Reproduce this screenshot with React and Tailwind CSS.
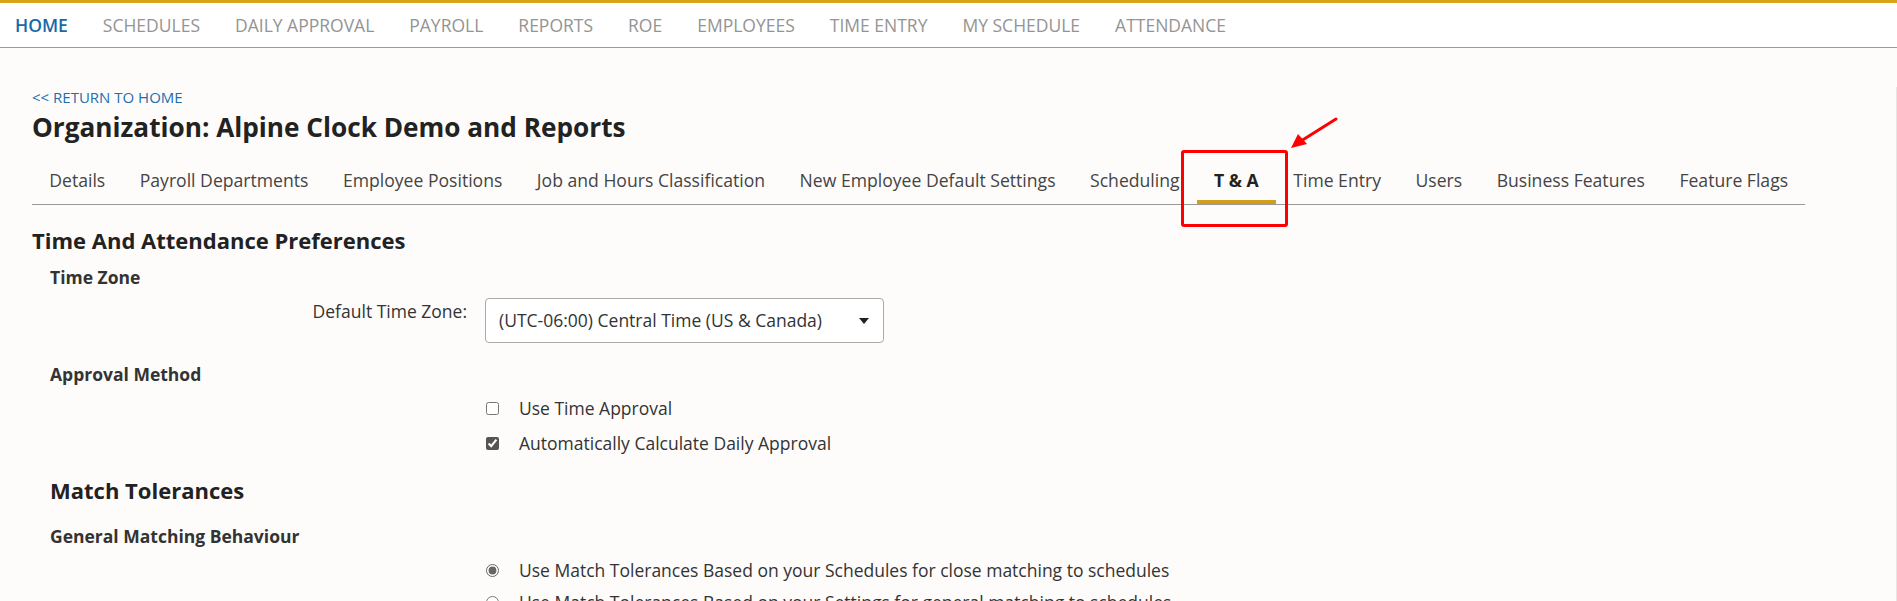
import React, { useState } from 'react';

const NAV = ['HOME', 'SCHEDULES', 'DAILY APPROVAL', 'PAYROLL', 'REPORTS', 'ROE', 'EMPLOYEES', 'TIME ENTRY', 'MY SCHEDULE', 'ATTENDANCE'];

const TABS = [
  'Details',
  'Payroll Departments',
  'Employee Positions',
  'Job and Hours Classification',
  'New Employee Default Settings',
  'Scheduling',
  'T & A',
  'Time Entry',
  'Users',
  'Business Features',
  'Feature Flags',
];

const FieldRow = ({ label, children, className = '' }) => (
  <div className={`flex items-start ${className}`}>
    <div className="w-[435px] shrink-0 pr-[18px] text-right text-[17.5px] leading-6 text-[#333]">{label}</div>
    <div className="flex-1">{children}</div>
  </div>
);

const Check = ({ label, checked }) => (
  <label className="flex items-center h-6 text-[17.5px] text-[#333]">
    <input type="checkbox" defaultChecked={checked} className="ml-[1px] w-[13px] h-[13px] accent-[#555]" />
    <span className="ml-[20px]">{label}</span>
  </label>
);

const Radio = ({ label, checked, name }) => (
  <label className="flex items-center h-6 text-[17.5px] text-[#333]">
    <input type="radio" name={name} defaultChecked={checked} className="ml-[1px] w-[13px] h-[13px] accent-[#666]" />
    <span className="ml-[20px] whitespace-nowrap">{label}</span>
  </label>
);

export default function App() {
  const [active, setActive] = useState('T & A');

  return (
    <div className="relative min-h-screen bg-[#fdfcfa] font-['Open_Sans',sans-serif] overflow-hidden">
      {/* Top navigation */}
      <header className="bg-white border-t-[3px] border-[#d9a418] border-b border-b-[#9a9a9a]">
        <nav className="flex h-[44px] items-center pl-[15px] gap-[35px] text-[17.5px]">
          {NAV.map((item) => (
            <a
              key={item}
              href="#"
              className={item === 'HOME' ? 'font-semibold text-[#1569a8]' : 'text-[#949494]'}
            >
              {item}
            </a>
          ))}
        </nav>
      </header>

      <main className="pl-8 pb-10 border-r border-[#e6e6e6]">
        <a href="#" className="block mt-[39px] text-[15px] leading-5 text-[#1d6fae]">&lt;&lt; RETURN TO HOME</a>
        <h1 className="mt-1 text-[26.2px] leading-8 font-bold text-[#222]">Organization: Alpine Clock Demo and Reports</h1>

        {/* Tabs */}
        <div className="mt-[15px] flex w-[1773px] border-b border-[#999]">
          {TABS.map((tab) => (
            <button
              key={tab}
              onClick={() => setActive(tab)}
              className={`shrink-0 whitespace-nowrap px-[17.25px] pt-[10px] pb-[8px] text-[17.6px] leading-6 border-b-4 ${
                active === tab ? 'font-bold text-[#222] border-[#d29f1d]' : 'text-[#444] border-transparent'
              }`}
            >
              {tab}
            </button>
          ))}
        </div>

        <h2 className="mt-[21px] text-[22px] leading-7 font-bold text-[#222]">Time And Attendance Preferences</h2>

        <div className="pl-[18px]">
          <h3 className="mt-[11px] text-[17.5px] leading-6 font-bold text-[#333]">Time Zone</h3>
          <FieldRow label="Default Time Zone:" className="mt-[10px]">
            <div className="flex items-center justify-between w-[399px] h-[45px] -mt-[1px] pl-[13px] pr-[14px] bg-white border border-[#aaa] rounded-[4px] text-[17.5px] text-[#333]">
              <span>(UTC-06:00) Central Time (US &amp; Canada)</span>
              <svg width="10" height="6" viewBox="0 0 10 6"><path d="M0 0h10L5 6z" fill="#222" /></svg>
            </div>
          </FieldRow>

          <h3 className="mt-[19px] text-[17.5px] leading-6 font-bold text-[#333]">Approval Method</h3>
          <FieldRow label="" className="mt-[10px]">
            <Check label="Use Time Approval" />
          </FieldRow>
          <FieldRow label="" className="mt-[11px]">
            <Check label="Automatically Calculate Daily Approval" checked />
          </FieldRow>

          <h2 className="mt-[21px] text-[22px] leading-7 font-bold text-[#222]">Match Tolerances</h2>
          <h3 className="mt-[20px] text-[17.5px] leading-6 font-bold text-[#333]">General Matching Behaviour</h3>
          <FieldRow label="" className="mt-[10px]">
            <Radio name="match" label="Use Match Tolerances Based on your Schedules for close matching to schedules" checked />
          </FieldRow>
          <FieldRow label="" className="mt-[8px]">
            <Radio name="match" label="Use Match Tolerances Based on your Settings for general matching to schedules" />
          </FieldRow>
        </div>
      </main>

      {/* Annotation overlay */}
      <div className="absolute left-[1181px] top-[150px] w-[107px] h-[77px] border-[3px] border-[#f00] rounded-[3px] pointer-events-none" />
      <svg className="absolute left-[1285px] top-[112px] pointer-events-none" width="60" height="42" viewBox="0 0 60 42">
        <line x1="51" y1="7" x2="16" y2="29" stroke="#f00" strokeWidth="3" strokeLinecap="round" />
        <path d="M6 36 L13 22 L22 32 Z" fill="#f00" />
      </svg>
    </div>
  );
}
